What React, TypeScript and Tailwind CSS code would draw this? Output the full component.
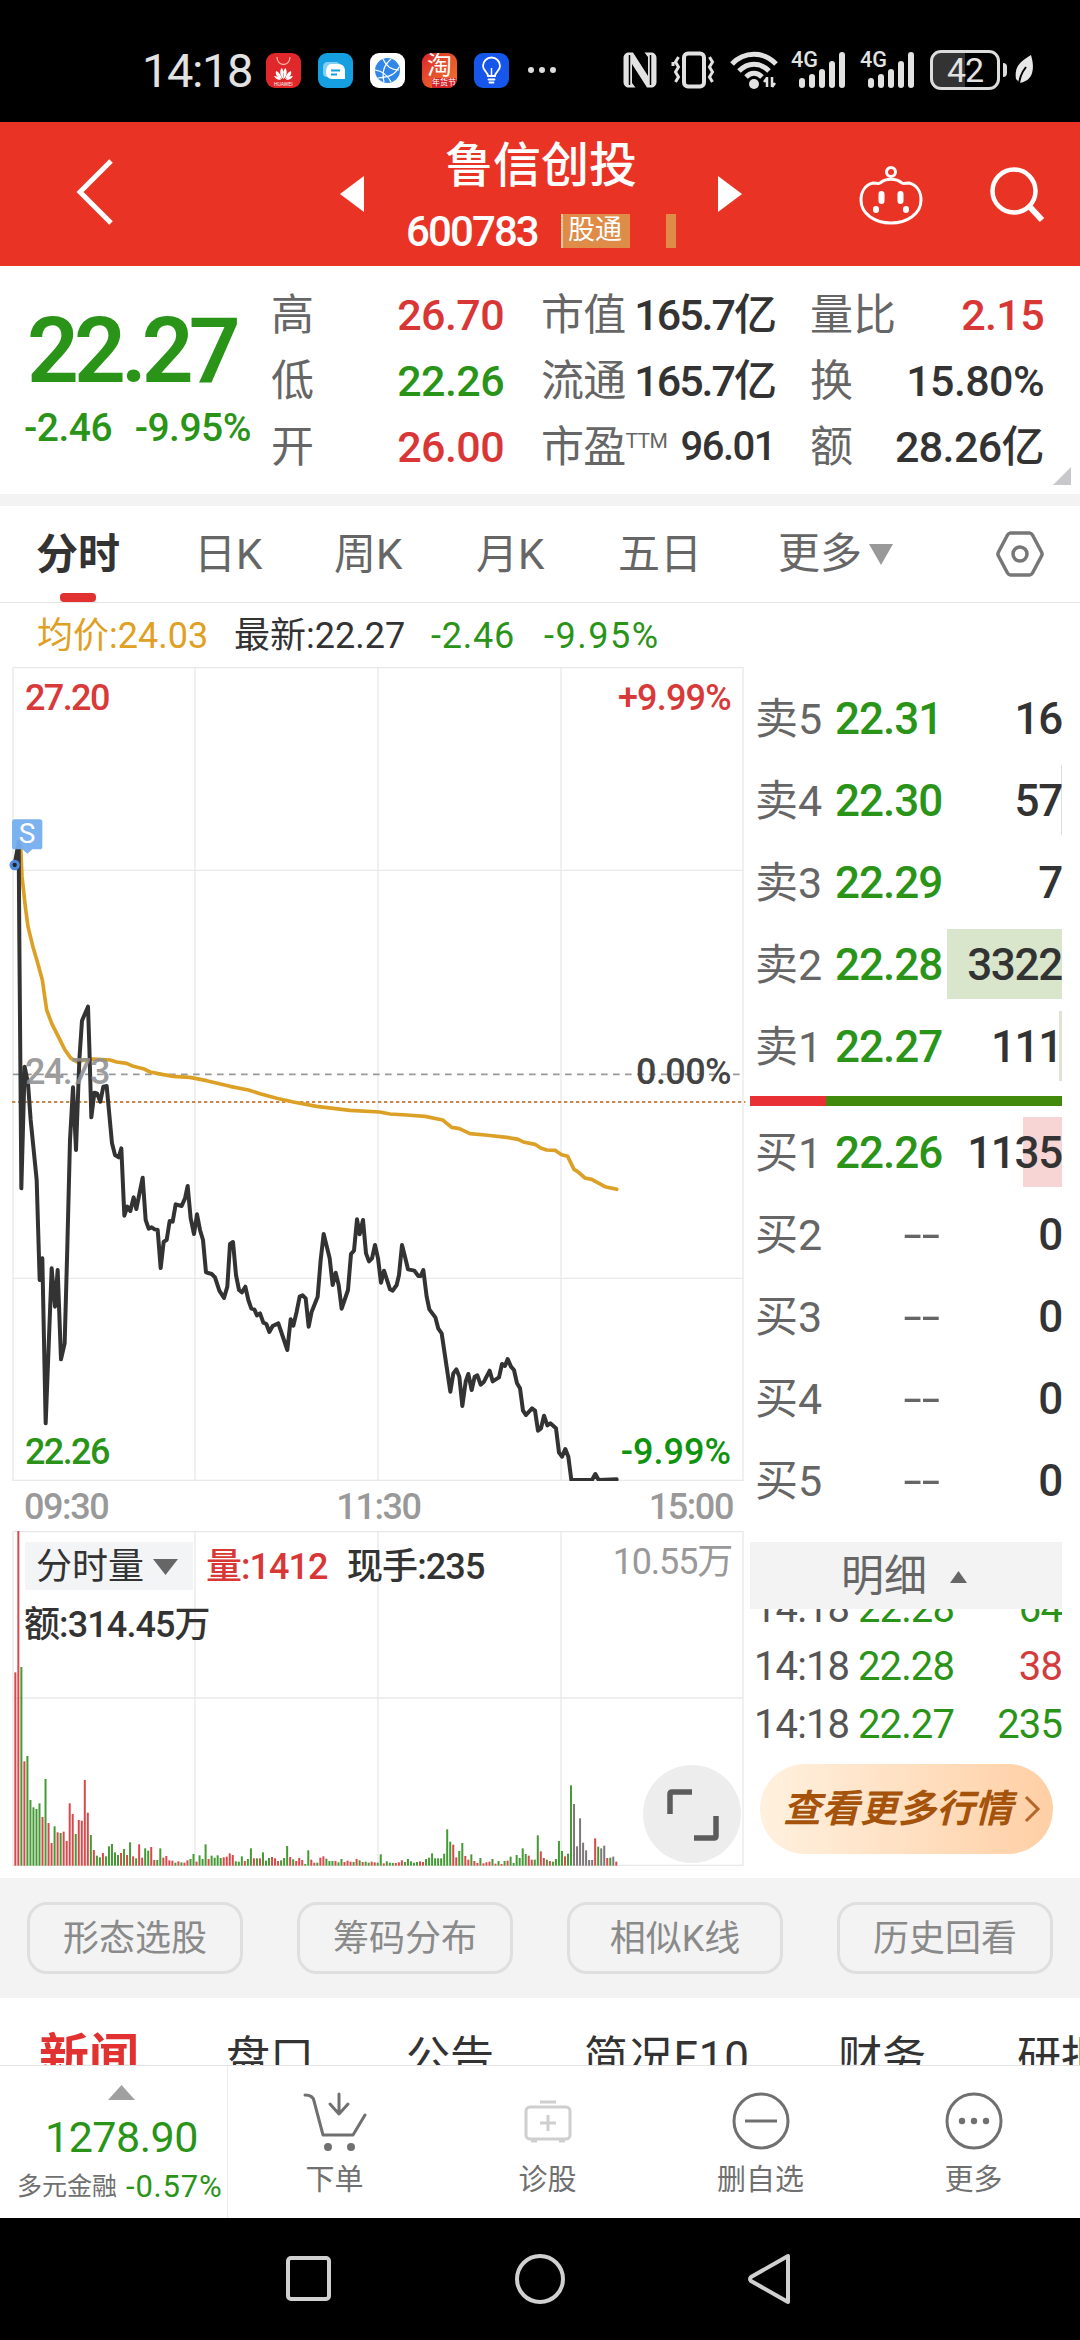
import { useState } from "react";
import clsx from "clsx";

const quotes = [
  [
    { label: "高", value: "26.70", color: "text-[#d93636]" },
    { label: "低", value: "22.26", color: "text-[#2a9418]" },
    { label: "开", value: "26.00", color: "text-[#d93636]" },
  ],
  [
    { label: "市值", value: "165.7亿", color: "text-[#333]" },
    { label: "流通", value: "165.7亿", color: "text-[#333]" },
    { label: "市盈", sup: "TTM", value: "96.01", color: "text-[#333]" },
  ],
  [
    { label: "量比", value: "2.15", color: "text-[#d93636]" },
    { label: "换", value: "15.80%", color: "text-[#333]" },
    { label: "额", value: "28.26亿", color: "text-[#333]" },
  ],
];

const quoteColumns = ["ml-[20px] w-[233px]", "ml-[37px] w-[234px] tracking-[-0.700px]", "ml-[35px] w-[234px]"];

const periods = [
  { id: "fs", label: "分时", width: "w-[158px]" },
  { id: "day", label: "日K", width: "w-[140px]" },
  { id: "week", label: "周K", width: "w-[142px]" },
  { id: "month", label: "月K", width: "w-[142px]" },
  { id: "five", label: "五日", width: "w-[160px]" },
];

const asks = [
  { label: "卖5", price: "22.31", qty: "16", bar: "w-0" },
  { label: "卖4", price: "22.30", qty: "57", bar: "w-px bg-[#dddddd]" },
  { label: "卖3", price: "22.29", qty: "7", bar: "w-0" },
  { label: "卖2", price: "22.28", qty: "3322", bar: "w-[115px] bg-[#d9e6cc]" },
  { label: "卖1", price: "22.27", qty: "111", bar: "w-[3px] bg-[#dfe3cf]" },
];

const bids = [
  { label: "买1", price: "22.26", qty: "1135", bar: "w-[39px] bg-[#f8d5d5]" },
  { label: "买2", price: "--", qty: "0", bar: "w-0" },
  { label: "买3", price: "--", qty: "0", bar: "w-0" },
  { label: "买4", price: "--", qty: "0", bar: "w-0" },
  { label: "买5", price: "--", qty: "0", bar: "w-0" },
];

const trades = [
  { time: "14:18", price: "22.28", qty: "64", color: "text-[#2a9418]" },
  { time: "14:18", price: "22.28", qty: "38", color: "text-[#d23c3c]" },
  { time: "14:18", price: "22.27", qty: "235", color: "text-[#2a9418]" },
];

const tools = ["形态选股", "筹码分布", "相似K线", "历史回看"];

const pricePoints =
  "44,-528 50,-560 56,-595 58,-300 61,60 64,445 74,80 84,130 92,240 110,420 119,720 127,655 137,1150 155,685 165,800 173,690 183,958 194,910 202,620 210,300 219,142 228,330 238,60 246,-58 264,-100 268,20 274,232 283,158 291,160 301,185 310,140 320,138 336,310 345,345 356,352 364,325 373,527 382,500 391,513 401,472 409,507 428,413 437,540 446,566 455,562 464,568 473,570 482,684 491,605 500,600 509,543 518,545 527,493 545,498 555,475 563,438 572,535 582,582 591,523 600,570 609,600 618,697 635,702 645,712 658,752 672,774 682,740 690,612 699,606 708,705 717,750 726,757 736,740 745,780 754,806 763,808 771,826 780,820 790,848 799,852 808,876 818,858 835,850 862,930 872,838 880,857 890,815 899,770 908,766 917,775 926,860 935,815 953,770 962,660 971,582 989,655 998,735 1007,698 1016,735 1025,806 1044,750 1053,642 1062,632 1071,538 1079,583 1089,540 1098,640 1107,664 1116,655 1125,615 1134,655 1143,728 1152,692 1170,748 1178,752 1190,735 1197,705 1206,615 1215,650 1224,688 1243,692 1255,708 1262,708 1270,690 1280,770 1288,808 1306,832 1315,866 1325,880 1351,1055 1360,1000 1369,988 1378,1010 1387,1098 1397,1025 1405,1002 1415,1050 1424,1010 1432,1006 1442,1034 1452,1025 1469,992 1478,1024 1497,1012 1506,972 1515,978 1523,957 1533,980 1542,990 1551,1030 1560,1045 1569,1112 1578,1125 1596,1105 1605,1112 1614,1172 1623,1165 1632,1127 1642,1156 1651,1150 1668,1165 1677,1238 1686,1250 1696,1227 1705,1250 1714,1320 1776,1320 1786,1302 1796,1320 1850,1318";

const averagePoints =
  "62,-580 66,-490 76,-400 84,-340 100,-275 112,-235 127,-180 140,-90 155,-50 175,-10 195,30 213,55 230,65 255,60 280,57 330,60 350,66 380,70 400,79 430,86 450,96 490,104 520,109 570,112 620,122 690,139 745,150 780,161 830,175 880,186 950,199 1050,211 1139,216 1170,222 1220,225 1275,229 1328,240 1355,262 1378,266 1410,281 1455,285 1520,292 1555,298 1570,306 1605,313 1622,324 1640,330 1665,331 1685,344 1703,349 1722,388 1732,394 1755,414 1775,418 1815,440 1850,448";

// one entry per minute: direction (r up, g down, k flat) and bar height
const volumes =
  "r580 r1005 g596 r313 g329 g197 g175 g170 g187 r146 g260 r128 r68 g118 r100 g98 r102 r74 r187 r155 g95 r137 r135 r257 r159 g92 r47 g30 g25 r38 g28 g58 g65 g40 g32 r38 g50 r32 g70 r28 g22 r64 r24 g52 g45 r56 r17 g17 g52 r24 r29 r16 r15 g9 r13 g10 r9 r16 g20 g35 r12 g31 g20 g64 r20 g30 g24 g31 g23 r25 r27 r37 r32 g13 g12 g28 r14 g20 g52 r22 g22 r22 g40 g15 g23 r26 r22 r14 g16 g23 g59 r26 g19 r14 r23 r17 g5 g46 r18 r9 g9 r24 r28 g21 g14 g14 r14 g10 g20 r11 r15 r12 g11 r20 g16 r11 g12 g9 r12 r10 g9 g34 r7 g13 g9 g8 r8 r10 r16 g11 g20 g13 g9 g11 r13 r11 g20 g24 g37 g22 g22 g22 g36 g109 g72 r63 r25 g44 g68 r29 r18 g34 r14 r8 g23 r7 r10 r12 g20 r6 g14 r5 g14 r15 g27 g8 g32 g23 g52 g35 r30 r18 g18 g91 r43 r23 g18 r14 g12 g20 g74 g44 r28 g36 g241 k185 k58 k142 k69 k46 k17 k17 r82 g57 k52 k60 r23 g24 k27 r12"
    .split(" ")
    .map((v) => ({ dir: v[0], h: Number(v.slice(1)) }));

const volumeColor: Record<string, string> = { r: "#d9494b", g: "#449a35", k: "#7d7779" };

function Signal() {
  return (
    <svg className="h-[38px] w-[56px] overflow-visible" viewBox="0 0 56 38" fill="#e2e2e2">
      <text x="0" y="16" fontSize="22" fontWeight="500" fontFamily="Roboto, sans-serif" textLength="27" lengthAdjust="spacingAndGlyphs">4G</text>
      <rect x="8" y="27" width="6" height="10" rx="3" />
      <rect x="18" y="23" width="6" height="14" rx="3" />
      <rect x="28" y="18" width="6" height="19" rx="3" />
      <rect x="38" y="10" width="6" height="27" rx="3" />
      <rect x="48" y="1" width="6" height="36" rx="3" />
    </svg>
  );
}

function StatusBar() {
  return (
    <div className="flex h-[122px] items-center bg-black pt-[18px] pl-[142px] text-[#e2e2e2]">
      <span className="w-[124px] text-[47px] leading-none tracking-[-1.400px]">14:18</span>
      <div className="flex gap-[17px]">
        <svg className="size-[35px]" viewBox="0 0 35 35">
          <rect width="35" height="35" rx="9" fill="#e0282b" />
          <path d="M11 4c0 10 13 10 13 0" fill="none" stroke="#f6b5a5" strokeWidth="1.3" />
          <path d="M17.500 26C13 22 14 16 16 15c2 3 2 7 1.500 11zM17.500 26c4.500-4 3.500-10 1.500-11-2 3-2 7-1.500 11zM16 26c-5-1-7-5-6-8 3 1 5 4 6 8zM19 26c5-1 7-5 6-8-3 1-5 4-6 8zM15 27c-4 0-6-2-7-4 3 0 5 1 7 4zM20 27c4 0 6-2 7-4-3 0-5 1-7 4z" fill="#fff" />
          <text x="8" y="33" fontSize="5" fill="#fff" fontFamily="Roboto, sans-serif">HUAWEI</text>
        </svg>
        <svg className="size-[35px]" viewBox="0 0 35 35">
          <rect width="35" height="35" rx="9" fill="#159fe0" />
          <path d="M9 9h10a8 8 0 0 1 5 5v10H9a4 4 0 0 1-4-4v-6a5 5 0 0 1 4-5z" fill="#7fd0f4" />
          <path d="M13 11h7c5 0 7 3 7 7v8H14c-4 0-6-3-6-7s2-8 5-8z" fill="#fff" />
          <path d="M13 17.500h9M13 21.500h6" stroke="#159fe0" strokeWidth="2" />
        </svg>
        <svg className="size-[35px]" viewBox="0 0 35 35">
          <rect width="35" height="35" rx="9" fill="#fff" />
          <circle cx="17.500" cy="17.500" r="12.500" fill="#3187e8" />
          <path d="M5 17c7 1 12 4 16 12M21 6c-8 7-9 14-7 23M13 6c3 7 8 11 16 11M29 14c-4 8-10 10-21 11" fill="none" stroke="#fff" strokeWidth="1.200" />
        </svg>
        <div className="relative size-[35px] overflow-hidden rounded-[9px] bg-gradient-to-br from-[#d8202a] to-[#f4752b] text-center">
          <span className="block text-[25px] leading-[25px] text-white">淘</span>
          <span className="absolute right-px bottom-0 rounded-tl-[3px] bg-[#d4232c] text-[8px] leading-[10px] text-white">年货节</span>
        </div>
        <svg className="size-[35px]" viewBox="0 0 35 35">
          <rect width="35" height="35" rx="9" fill="#1656ea" />
          <path d="M14 23c0-4-5-5-5-10a8.500 8.500 0 0 1 17 0c0 5-5 6-5 10zM14.500 26.500h6M15.500 29.500h4" fill="none" stroke="#fff" strokeWidth="1.800" strokeLinecap="round" />
          <path d="M17.500 22v-7" stroke="#fff" strokeWidth="1.500" />
        </svg>
      </div>
      <div className="ml-[19px] flex gap-[5px]">
        <i className="size-[6px] rounded-full bg-[#ddd]" />
        <i className="size-[6px] rounded-full bg-[#ddd]" />
        <i className="size-[6px] rounded-full bg-[#ddd]" />
      </div>
      <svg className="ml-[67px] h-[36px] w-[34px]" viewBox="0 0 34 36" fill="#e2e2e2">
        <path d="M6 .5h4L25 24V5l-3.500-4.500H28c3 0 5.500 2 5.500 5.500v24c0 3.500-2.500 5.500-5.500 5.500h-4L9 12v19l3.500 4.500H6C3 35.500.5 33.500.5 30V6C.5 2.500 3 .5 6 .5z" />
        <path d="M6.500 3v30M27.500 3v30" stroke="#000" strokeWidth="1.500" />
      </svg>
      <svg className="ml-[14px] h-[38px] w-[46px]" viewBox="0 0 46 38" fill="none" stroke="#e2e2e2">
        <rect x="13" y="2.500" width="20" height="33" rx="4" strokeWidth="4" />
        <path d="M7.500 6l-3 5 3 5-3 5 3 5-3 5M2 11v4M38.500 6l3 5-3 5 3 5-3 5 3 5" strokeWidth="3" />
      </svg>
      <svg className="ml-[13px] h-[38px] w-[48px]" viewBox="0 0 48 38" fill="none" stroke="#e2e2e2" strokeWidth="5">
        <path d="M2 13c12-13 32-13 44 0M9 20c9-9 21-9 30 0M16 26c5-5 11-5 16 0" />
        <circle cx="24" cy="33" r="5" fill="#e2e2e2" stroke="none" />
        <path d="M37 26v10M42 26v10M34 31l3-4M45 32l-3 4" strokeWidth="2.500" />
      </svg>
      <div className="ml-[13px] flex gap-[13px]">
        <Signal />
        <Signal />
      </div>
      <div className="ml-[14px] flex h-[40px] w-[70px] items-center justify-center rounded-[11px] border-[3px] border-[#dcdcdc] bg-gradient-to-r from-[#333] from-50% to-black to-50% text-[34px] leading-none tracking-[-1px]">
        42
      </div>
      <i className="ml-[3px] h-[14px] w-[4px] rounded-r bg-[#dcdcdc]" />
      <svg className="ml-[7px] h-[32px] w-[21px]" viewBox="0 0 21 32">
        <path d="M17 1C7 7 0 12 2 25l4 4c11-2 16-11 11-28z" fill="#e8e8e8" />
        <path d="M5 32c0-8 3-14 7-19" fill="none" stroke="#000" strokeWidth="2" />
      </svg>
    </div>
  );
}

function Header() {
  return (
    <header className="flex h-[144px] items-start bg-[#e93425] text-white">
      <svg className="mt-[36px] ml-[75px] h-[68px] w-[40px]" viewBox="0 0 40 68" fill="none" stroke="#fff" strokeWidth="5">
        <path d="M36 3L5 34l31 31" />
      </svg>
      <svg className="mt-[54px] ml-[225px] h-[36px] w-[24px]" viewBox="0 0 24 36">
        <path d="M24 0v36L0 18z" fill="#fff" />
      </svg>
      <div className="w-[354px]">
        <h1 className="pt-[14px] text-center text-[48px] leading-[60px] font-medium">鲁信创投</h1>
        <div className="flex h-[68px] items-center pt-px pl-[42px]">
          <span className="w-[155px] pt-[2px] text-[42px] leading-none font-medium tracking-[-1.900px]">600783</span>
          <span className="h-[34px] w-[69px] border-l-2 border-[#efc9a0] bg-[#de8c47] pl-[5px] text-[27px] leading-[33px]">股通</span>
          <i className="ml-[36px] h-[34px] w-[10px] bg-[#de8c47]" />
        </div>
      </div>
      <svg className="mt-[54px] h-[36px] w-[24px]" viewBox="0 0 24 36">
        <path d="M0 0v36l24-18z" fill="#fff" />
      </svg>
      <svg className="mt-[42px] ml-[116px] h-[62px] w-[66px]" viewBox="0 0 66 62" fill="none" stroke="#fff" strokeWidth="3">
        <path d="M15 19c4 0 5 1 7 0 6-5 16-5 22 0 2 1 3 0 7 0 8 2 12 9 12 17 0 14-14 23-30 23S3 50 3 36c0-8 4-15 12-17z" />
        <circle cx="33" cy="8" r="4.500" />
        <path d="M23.500 30v7M42.500 30v7" strokeWidth="6" strokeLinecap="round" />
        <path d="M18 45v1M48 45v1" strokeWidth="6" strokeLinecap="round" />
      </svg>
      <svg className="mt-[43px] ml-[65px] h-[60px] w-[60px]" viewBox="0 0 60 60" fill="none" stroke="#fff" strokeWidth="4.500">
        <circle cx="25" cy="26" r="21.500" />
        <path d="M40 41l13 14" strokeWidth="6" />
      </svg>
    </header>
  );
}

function QuotePanel() {
  return (
    <section className="relative flex h-[228px] bg-white">
      <div className="w-[251px] pl-[24px] text-[#2a9418]">
        <div className="pt-[35px] pl-[3px] text-[91px] leading-[100px] font-semibold tracking-[-5px]">22.27</div>
        <div className="flex pt-px text-[39px] leading-[52px] font-medium tracking-[-0.500px]">
          <span className="w-[111px]">-2.46</span>
          <span>-9.95%</span>
        </div>
      </div>
      {quotes.map((column, i) => (
        <div key={i} className={clsx("pt-[16px]", quoteColumns[i])}>
          {column.map((item) => (
            <div key={item.label} className="flex h-[66px] items-center justify-between text-[43px] leading-none whitespace-nowrap">
              <span className="flex text-[#666]">
                {item.label}
                {item.sup && <sup className="top-0 pt-[5px] text-[21px] leading-none font-normal">{item.sup}</sup>}
              </span>
              <span className={clsx("font-medium", item.sup ? "text-[40px] tracking-[-1.500px]" : i === 1 ? "text-[43px] tracking-[-2px]" : "text-[43px] tracking-[-0.600px]", item.color)}>{item.value}</span>
            </div>
          ))}
        </div>
      ))}
      <svg className="absolute right-[9px] bottom-[9px] h-[18px] w-[18px]" viewBox="0 0 18 18">
        <path d="M18 0v18H0z" fill="#c8c8ca" />
      </svg>
    </section>
  );
}

function PeriodTabs() {
  const [active, setActive] = useState("fs");

  return (
    <nav className="flex h-[97px] border-b border-[#e4e4e4] bg-white pl-[36px] text-[42px] leading-[98px] text-[#666]">
      {periods.map((p) => (
        <button key={p.id} onClick={() => setActive(p.id)} className={clsx("relative text-left", p.width, active === p.id && "font-bold text-[#333]")}>
          {p.label}
          {active === p.id && <i className="absolute bottom-0 left-[24px] h-[9px] w-[36px] rounded-[4px] bg-[#e23131]" />}
        </button>
      ))}
      <button className="flex w-[212px] items-center gap-[7px]">
        更多
        <svg className="h-[21px] w-[24px]" viewBox="0 0 24 21">
          <path d="M0 0h24L12 21z" fill="#999" />
        </svg>
      </button>
      <svg className="mt-[24px] ml-[4px] h-[48px] w-[52px]" viewBox="0 0 52 48" fill="none" stroke="#777" strokeWidth="3.500">
        <path d="M16.500 3h19a4 4 0 0 1 3 2l9 17a4 4 0 0 1 0 4l-9 17a4 4 0 0 1-3 2h-19a4 4 0 0 1-3-2l-9-17a4 4 0 0 1 0-4l9-17a4 4 0 0 1 3-2z" />
        <circle cx="26" cy="24" r="7" />
      </svg>
    </nav>
  );
}

function PriceChart() {
  return (
    <div className="relative h-[814px] text-[36px] leading-[40px] font-medium tracking-[-1.600px]">
      <svg className="block h-[814px] w-[750px]" viewBox="0 0 2250 2442" fill="none">
        <g stroke="#e9e9e9" strokeWidth="4">
          <rect x="39" y="2" width="2190" height="2438" />
          <path d="M585 2v2438M1134 2v2438M1683 2v2438" />
          <path d="M39 610h2190M39 1834h2190" />
        </g>
        <path d="M39 1222h2180" stroke="#999" strokeWidth="5" strokeDasharray="20 16" />
        <path d="M36 1305h2200" stroke="#c6884c" strokeWidth="6" strokeDasharray="10 8" />
        <g transform="translate(0 1119)" strokeWidth="12" strokeLinejoin="round" strokeLinecap="round">
          <polyline points={averagePoints} stroke="#dca026" strokeWidth="11" />
          <polyline points={pricePoints} stroke="#333" />
        </g>
        <circle cx="44" cy="594" r="11" stroke="#4c8be0" strokeWidth="9" fill="#222" />
        <path d="M44 457h75q8 0 8 8v74q0 8-8 8h-22l-15 13-15-13H44q-8 0-8-8v-74q0-8 8-8z" fill="#76aef0" fillOpacity=".95" />
      </svg>
      <span className="absolute top-[151px] left-[12px] w-[30px] text-center text-[28px] leading-[32px] font-normal tracking-normal text-white">S</span>
      <span className="absolute top-[11px] left-[25px] text-[#d83a3a]">27.20</span>
      <span className="absolute top-[11px] right-[19px] tracking-[-0.800px] text-[#d83a3a]">+9.99%</span>
      <span className="absolute top-[385px] left-[25px] text-[#8f8f8f]/90">24.73</span>
      <span className="absolute top-[385px] right-[19px] tracking-[-0.600px] text-[#444]">0.00%</span>
      <span className="absolute top-[765px] left-[25px] text-[#2a9418]">22.26</span>
      <span className="absolute top-[765px] right-[19px] tracking-normal text-[#0e930e]">-9.99%</span>
    </div>
  );
}

function VolumeChart() {
  return (
    <div className="relative h-[347px] text-[36px] leading-[40px] font-medium text-[#333]">
      <svg className="block h-[347px] w-[750px]" viewBox="0 0 2250 1041" fill="none">
        <g stroke="#e9e9e9" strokeWidth="4">
          <rect x="39" y="2" width="2190" height="1001" />
          <path d="M585 2v1001M1134 2v1001M1683 2v1001M39 501h2190" />
        </g>
        {volumes.map((v, i) => (
          <rect key={i} x={43 + i * 9.06} y={1004 - v.h} width="6" height={v.h} fill={volumeColor[v.dir]} />
        ))}
      </svg>
      <div className="absolute top-[11px] left-[25px] flex items-center">
        <button className="flex h-[48px] w-[168px] items-center gap-[9px] bg-[#f2f4f6] pt-[2px] pl-[11px] font-normal">
          分时量
          <svg className="h-[16px] w-[25px]" viewBox="0 0 25 16">
            <path d="M0 0h25L12.500 16z" fill="#666" />
          </svg>
        </button>
        <span className="ml-[13px] w-[141px] pt-[2px] tracking-[-1px] text-[#d93636]">量:1412</span>
        <span className="pt-[2px] tracking-[-0.900px]">现手:235</span>
      </div>
      <span className="absolute top-[74px] left-[24px] tracking-[-0.900px]">额:314.45万</span>
      <span className="absolute top-[11px] right-[18px] font-normal tracking-[-1.200px] text-[#999]">10.55万</span>
      <button className="absolute top-[234px] left-[643px] size-[98px] rounded-full bg-[#ededed]">
        <svg className="size-[98px]" viewBox="0 0 98 98" fill="none" stroke="#5c5c5c" strokeWidth="5.500">
          <path d="M27 49V29q0-2 2-2h20M51 73h20q2 0 2-2V51" />
        </svg>
      </button>
    </div>
  );
}

function BookRow({ label, price, qty, bar }: { label: string; price: string; qty: string; bar: string }) {
  return (
    <div className="relative flex h-[82px] items-center justify-end pt-[2px] text-[44px] leading-none">
      <span className="w-[80px] text-[43px] text-[#666]">{label}</span>
      {price === "--" ? (
        <span className="w-[105px] origin-right scale-x-150 text-right text-[#666]">{price}</span>
      ) : (
        <span className="w-[105px] font-medium tracking-[-1px] text-[#2a9418]">{price}</span>
      )}
      <div className={clsx("absolute top-[6px] right-0 h-[70px]", bar)} />
      <span className="relative w-[122px] text-right font-medium tracking-[-1.300px] text-[#333]">{qty}</span>
    </div>
  );
}

function OrderBook() {
  return (
    <aside className="w-[312px] pt-[10px]">
      {asks.map((row) => (
        <BookRow key={row.label} {...row} />
      ))}
      <div className="mt-[9px] mb-[5px] flex h-[10px] bg-[#418a0b]">
        <div className="w-[76px] bg-[#e83034]" />
      </div>
      {bids.map((row) => (
        <BookRow key={row.label} {...row} />
      ))}
      <button className="relative mt-[21px] flex h-[67px] w-full items-center bg-[#f3f3f3] pt-[2px] pl-[91px] text-[43px] leading-none text-[#666]">
        明细
        <svg className="ml-[23px] h-[12px] w-[17px]" viewBox="0 0 17 12">
          <path d="M8.500 0L17 12H0z" fill="#666" />
        </svg>
      </button>
      <div className="h-[144px] overflow-hidden">
        <div className="-mt-[29px]">
          {trades.map((t, i) => (
            <div key={i} className="flex h-[58px] items-center pl-[4px] text-[40px] leading-none tracking-[-0.900px]">
              <span className="w-[104px] text-[#555]">{t.time}</span>
              <span className="text-[#2a9418]">{t.price}</span>
              <span className={clsx("flex-1 text-right", t.color)}>{t.qty}</span>
            </div>
          ))}
        </div>
      </div>
      <button className="mt-[11px] ml-[10px] flex h-[90px] w-[293px] items-center rounded-full bg-gradient-to-r from-[#fff1df] to-[#ffcfa5] pl-[12px] text-[38px] leading-none font-bold text-[#a5530a] italic">
        <span className="w-[252px] tracking-[0.300px] whitespace-nowrap">查看更多行情</span>
        <svg className="h-[28px] w-[17px]" viewBox="0 0 17 28" fill="none" stroke="#b5662a" strokeWidth="3">
          <path d="M2 2l12 12L2 26" />
        </svg>
      </button>
    </aside>
  );
}

function BottomBar() {
  return (
    <footer className="flex h-[153px] border-t border-[#e2e2e2] bg-white text-[29px] leading-[34px] text-[#707070]">
      <div className="w-[228px] border-r border-[#ececec]">
        <svg className="mt-[19px] ml-[108px] h-[15px] w-[27px]" viewBox="0 0 27 15">
          <path d="M13.500 0L27 15H0z" fill="#a0a0a0" />
        </svg>
        <div className="mt-[12px] ml-[45px] text-[43px] leading-[50px] tracking-[-0.500px] text-[#2a9418]">1278.90</div>
        <div className="mt-[8px] ml-[17px] flex items-center gap-[9px] whitespace-nowrap">
          <span className="text-[25px]">多元金融</span>
          <span className="text-[31px] tracking-[0.800px] text-[#2a9418]">-0.57%</span>
        </div>
      </div>
      <div className="flex w-[213px] flex-col items-center">
        <svg className="mt-[25px] h-[60px] w-[64px]" viewBox="0 0 64 60" fill="none" stroke="#707070" strokeWidth="3" strokeLinejoin="round" strokeLinecap="round">
          <path d="M2 4q8 0 9 6l9 34h30l12-20" />
          <path d="M36 3v19M27 13l9 10 9-10" />
          <circle cx="25" cy="56" r="2.500" fill="#707070" />
          <circle cx="48" cy="56" r="2.500" fill="#707070" />
        </svg>
        <span className="mt-[12px]">下单</span>
      </div>
      <div className="flex w-[213px] flex-col items-center">
        <svg className="mt-[33px] h-[44px] w-[48px]" viewBox="0 0 48 44" fill="none" stroke="#cfcfcf" strokeWidth="3">
          <rect x="2" y="8" width="44" height="32" rx="4" />
          <path d="M16 3h16M24 16v16M16 24h16M7 42h6M35 42h6" />
        </svg>
        <span className="mt-[20px]">诊股</span>
      </div>
      <div className="flex w-[213px] flex-col items-center">
        <svg className="mt-[25px] size-[60px]" viewBox="0 0 60 60" fill="none" stroke="#707070" strokeWidth="3">
          <circle cx="30" cy="30" r="27" />
          <path d="M14 30h32" />
        </svg>
        <span className="mt-[12px]">删自选</span>
      </div>
      <div className="flex w-[213px] flex-col items-center">
        <svg className="mt-[25px] size-[60px]" viewBox="0 0 60 60" fill="#707070">
          <circle cx="30" cy="30" r="27" fill="none" stroke="#707070" strokeWidth="3" />
          <circle cx="18" cy="30" r="3.200" />
          <circle cx="30" cy="30" r="3.200" />
          <circle cx="42" cy="30" r="3.200" />
        </svg>
        <span className="mt-[12px]">更多</span>
      </div>
    </footer>
  );
}

export default function App() {
  return (
    <div className="h-[2340px] w-[1080px] overflow-hidden bg-white font-['Roboto','Noto_Sans_CJK_SC',sans-serif]">
      <StatusBar />
      <Header />
      <QuotePanel />
      <div className="h-3 bg-[#f3f3f3]" />
      <PeriodTabs />
      <div className="flex h-[64px] items-center pt-[2px] pl-[37px] text-[36px] leading-none text-[#333]">
        <span className="w-[197px] text-[#e0a023]">均价:24.03</span>
        <span className="w-[197px]">最新:22.27</span>
        <span className="w-[113px] tracking-[0.800px] text-[#2a9418]">-2.46</span>
        <span className="tracking-[1.500px] text-[#2a9418]">-9.95%</span>
      </div>

      <main className="flex h-[1211px]">
        <div className="w-[750px]">
          <PriceChart />
          <div className="flex h-[50px] items-center justify-between pt-[2px] pr-[17px] pl-[24px] text-[36px] font-medium tracking-[-1.400px] text-[#999]">
            <span>09:30</span>
            <span>11:30</span>
            <span>15:00</span>
          </div>
          <VolumeChart />
        </div>
        <OrderBook />
      </main>

      <div className="flex h-[120px] items-center gap-[54px] bg-[#f3f3f3] pl-[27px]">
        {tools.map((t) => (
          <button key={t} className="h-[72px] w-[216px] rounded-[20px] border-[3px] border-[#dfdfdf] text-[36px] leading-[68px] text-[#8a8a8a]">
            {t}
          </button>
        ))}
      </div>

      <div className="flex h-[67px] overflow-hidden pt-[30px] pl-[39px] text-[44px] leading-[60px] whitespace-nowrap text-[#333]">
        <span className="w-[187px] shrink-0 text-[50px] font-bold text-[#e23131]">新闻</span>
        <span className="w-[180px] shrink-0">盘口</span>
        <span className="w-[178px] shrink-0">公告</span>
        <span className="w-[254px] shrink-0 tracking-[0.800px]">简况F10</span>
        <span className="w-[179px] shrink-0">财务</span>
        <span className="shrink-0">研报</span>
      </div>

      <BottomBar />

      <div className="flex h-[122px] items-center bg-black pl-[286px]">
        <svg className="h-[52px] w-[48px]" viewBox="0 0 48 52" fill="none" stroke="#d0d0d0" strokeWidth="4">
          <rect x="2" y="5" width="41" height="41" rx="3" />
        </svg>
        <svg className="ml-[180px] size-[52px]" viewBox="0 0 52 52" fill="none" stroke="#d0d0d0" strokeWidth="4">
          <circle cx="26" cy="26" r="23" />
        </svg>
        <svg className="ml-[181px] h-[52px] w-[46px]" viewBox="0 0 46 52" fill="none" stroke="#d0d0d0" strokeWidth="4" strokeLinejoin="round">
          <path d="M41 3v46L4 28q-2-2 0-4z" />
        </svg>
      </div>
    </div>
  );
}
